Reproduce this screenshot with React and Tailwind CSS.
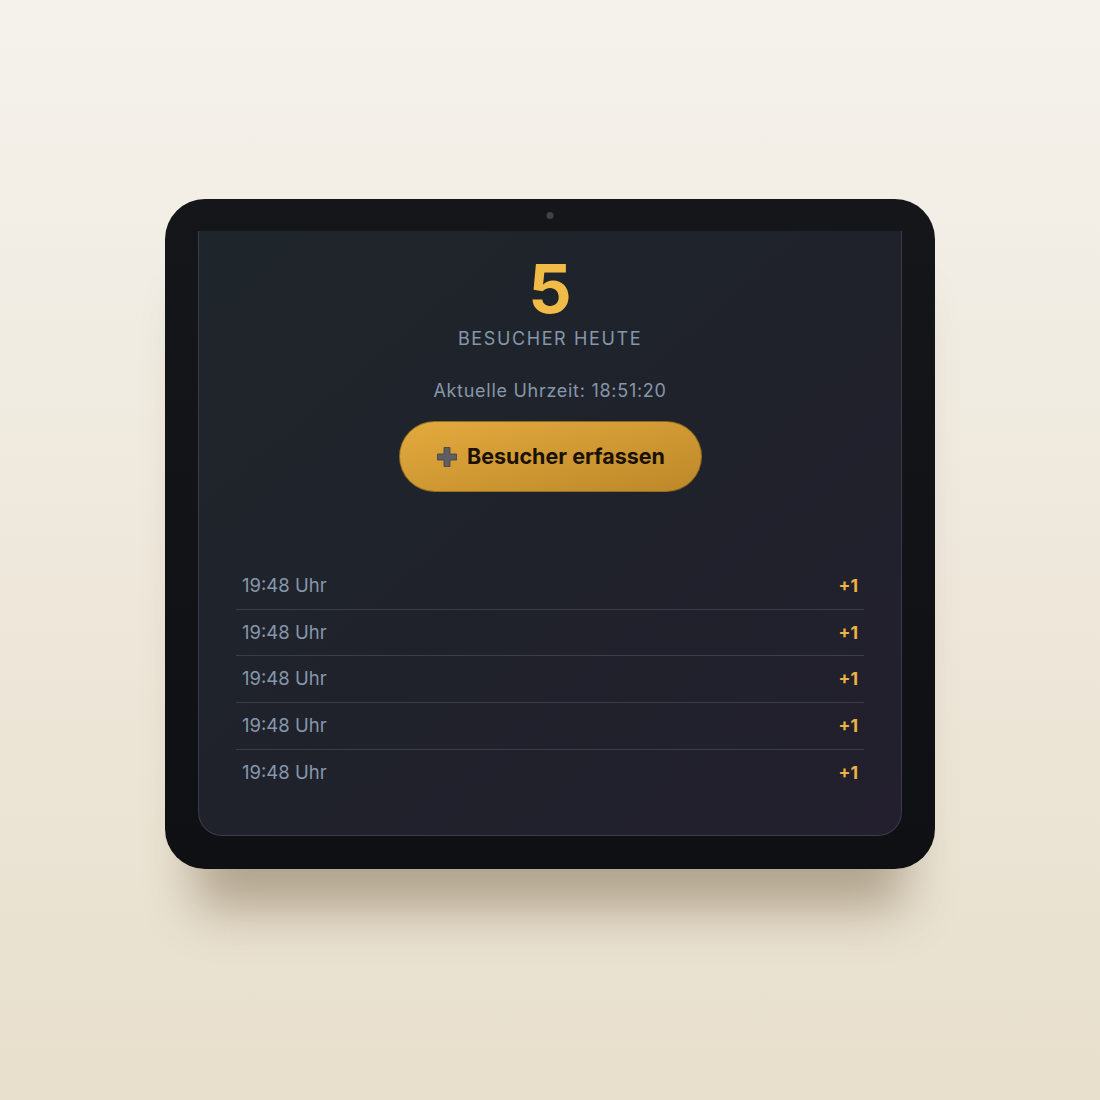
export default function App() {
  const rows = [1, 2, 3, 4, 5]
  return (
    <div
      className="w-[1100px] h-[1100px] flex justify-center pt-[199px] bg-gradient-to-b from-[#f5f2ec] to-[#e8dfcc]"
      style={{ fontFamily: 'Inter, "Noto Sans", sans-serif' }}
    >
      {/* Tablet */}
      <div className="relative w-[770px] h-[670px] rounded-[40px] bg-gradient-to-b from-[#15161a] to-[#0f1013] pt-[32px] px-[33px] shadow-[0_70px_50px_-30px_rgba(90,70,40,0.4)]">
        {/* Camera */}
        <div className="absolute left-1/2 top-[13px] -translate-x-1/2 w-[7px] h-[7px] rounded-full bg-[#404247]" />

        {/* Screen */}
        <div className="w-[704px] h-[605px] rounded-b-[24px] border-x border-b border-[#3a3c4a] bg-gradient-to-br from-[#1f262b] via-[#1f222b] to-[#231f2e] flex flex-col items-center pt-[23px]">
          <div className="text-[68px] leading-none font-bold text-[#f0bc47]">5</div>
          <div className="mt-[3px] text-[18px] leading-[27px] tracking-[0.09em] text-[#8697aa]">BESUCHER HEUTE</div>
          <div className="mt-[25px] text-[18px] leading-[27px] tracking-[0.04em] text-[#8697aa]">Aktuelle Uhrzeit: 18:51:20</div>

          <button className="mt-[17px] w-[303px] h-[71px] rounded-full bg-gradient-to-br from-[#e3aa3d] to-[#bd8829] border border-[#6b4d16]/60 flex items-center justify-center gap-[8px] text-[21.5px] font-bold text-[#1a1207]">
            <svg width="24" height="24" viewBox="0 0 24 24" className="shrink-0">
              <path d="M9 2.5h6v6.5h6.5v6h-6.5v6.5h-6v-6.5h-6.5v-6h6.5z" fill="#5f5f63" stroke="#3f3f44" strokeWidth="0.8" />
            </svg>
            Besucher erfassen
          </button>

          <div className="mt-[71px] w-[628px] flex flex-col">
            {rows.map((r, i) => (
              <div
                key={r}
                className={`flex items-center justify-between px-[6px] py-[12px] leading-[21.7px] ${i < rows.length - 1 ? 'border-b border-[#3b3e48]' : ''}`}
              >
                <span className="text-[18.5px] text-[#8797ab]">19:48 Uhr</span>
                <span className="text-[17.5px] font-bold text-[#ecb442]">+1</span>
              </div>
            ))}
          </div>
        </div>
      </div>
    </div>
  )
}
